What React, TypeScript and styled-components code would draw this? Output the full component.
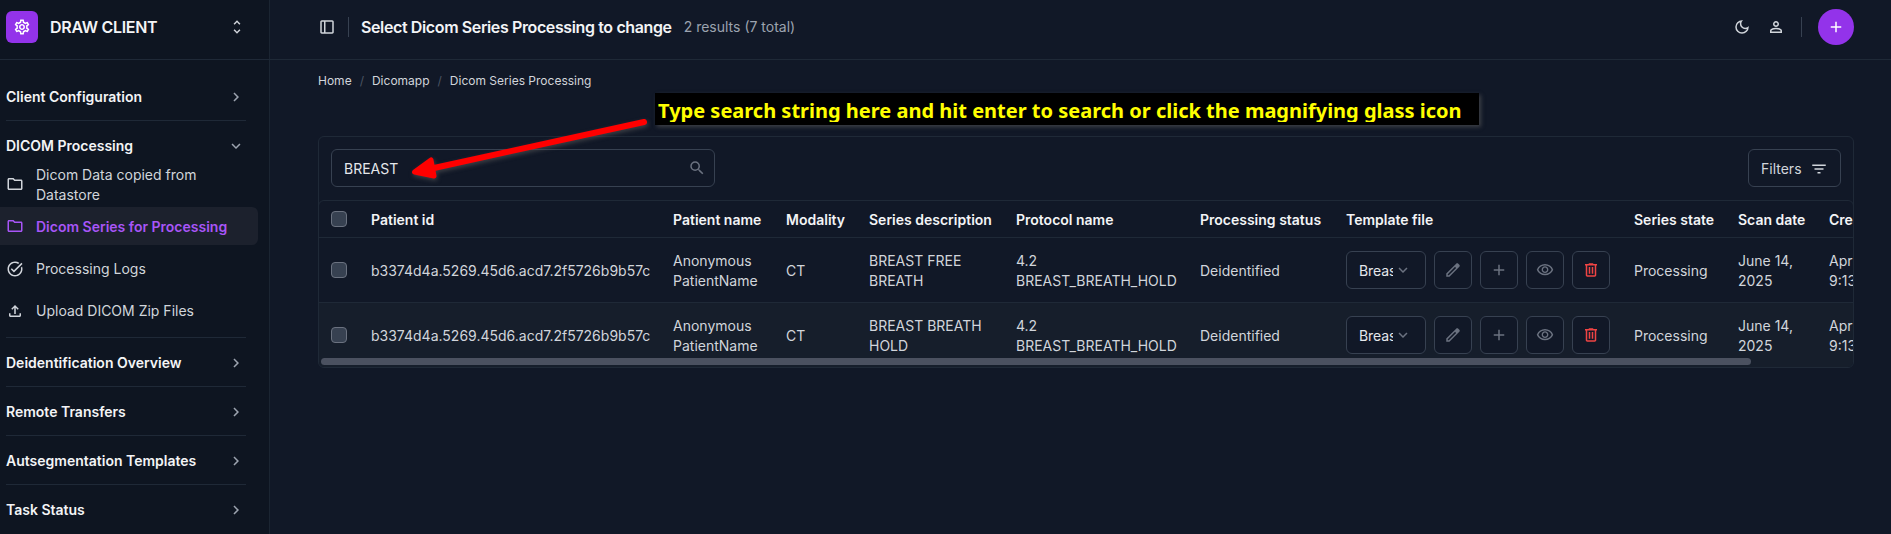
import React from "react";
import styled, { createGlobalStyle, css } from "styled-components";
import {
  MdUnfoldMore, MdChevronRight, MdExpandMore, MdOutlineFolder, MdOutlineTaskAlt, MdOutlineFileUpload,
  MdSearch, MdFilterList, MdAdd, MdOutlineSettings,
} from "react-icons/md";

const Global = createGlobalStyle`
  *, *::before, *::after { box-sizing: border-box; }
  body {
    margin: 0; background: #111827; color: #d1d5db; overflow: hidden;
    font-family: Inter, "Liberation Sans", sans-serif; font-size: 14px; line-height: 20px;
  }
  button { font: inherit; color: inherit; background: none; padding: 0; margin: 0; }
`;

const Page = styled.div`
  display: flex; width: 100%; height: 534px; overflow: hidden;
`;

/* ---------- sidebar ---------- */
const Sidebar = styled.aside`
  width: 270px; flex: none; background: #0e1521; border-right: 1px solid #1b2532;
`;
const Brand = styled.div`
  display: flex; align-items: center; height: 60px; padding: 0 24px 6px 6px;
  border-bottom: 1px solid #1f2937; width: 270px;
  span { flex: 1; font-size: 16px; font-weight: 600; color: #f3f4f6; letter-spacing: -0.3px; }
`;
const Logo = styled.div`
  width: 32px; height: 32px; border-radius: 6px; background: #9333ea; color: #fff;
  display: flex; align-items: center; justify-content: center; margin-right: 12px;
`;
const Nav = styled.nav`
  padding: 12px 23px 0 6px;
`;
const Group = styled.section`
  border-bottom: 1px solid #1f2937;
  &:last-child { border-bottom: 0; }
`;
const GroupTitle = styled.div`
  display: flex; align-items: center; justify-content: space-between;
  height: 48px; padding: 2px 1px 0 0; font-weight: 600; color: #f3f4f6;
  svg { color: #9ca3af; margin-top: -1px; }
`;
const Links = styled.div`
  padding-bottom: 5px; margin-top: -7px;
`;
const NavLink = styled.div<{ $active?: boolean; $tall?: boolean }>`
  display: flex; align-items: center; height: ${(p) => (p.$tall ? 45 : 42)}px; gap: 12px;
  margin: 0 -12px 0 -6px; padding: 0 40px 0 6px; color: #d1d5db;
  svg { flex: none; margin-top: -1px; }
  ${(p) => p.$active && css`
    height: 38px; margin-bottom: 3px; background: #1c212d; color: #a855f7; font-weight: 600;
    border-radius: 0 6px 6px 0; padding-top: 1px; padding-right: 0;
  `}
`;

/* ---------- main ---------- */
const Main = styled.main`
  flex: 1; min-width: 0;
`;
const Header = styled.header`
  display: flex; align-items: center; height: 60px; padding: 0 37px 6px 48px;
  border-bottom: 1px solid #1f2937;
`;
const Rule = styled.i`
  width: 1px; height: 20px; background: #374151;
`;
const Title = styled.h1`
  margin: 0 12px; font-size: 16px; font-weight: 600; color: #f3f4f6; letter-spacing: -0.38px;
`;
const Count = styled.span`
  flex: 1; color: #9ca3af; padding-top: 1px;
`;
const HeadIcons = styled.div<{ $gap?: number }>`
  display: flex; align-items: center; color: #d1d5db; gap: ${(p) => p.$gap ?? 16}px;
`;
const AddButton = styled.button`
  width: 36px; height: 36px; border: 0; border-radius: 50%; background: #9333ea; color: #fff;
  display: flex; align-items: center; justify-content: center;
`;
const Crumbs = styled.div`
  display: flex; padding: 11px 48px 0; gap: 8px; font-size: 12px;
  i { color: #4b5563; font-style: normal; }
`;
const Panel = styled.section`
  margin: 45px 37px 0 48px; height: 232px; border: 1px solid #1f2937; border-radius: 6px; overflow: hidden;
`;
const Toolbar = styled.div`
  display: flex; justify-content: space-between; padding: 12px;
`;
const box = css`
  height: 38px; border: 1px solid #374151; border-radius: 6px; display: flex; align-items: center;
`;
const Search = styled.div`
  ${box} width: 384px; padding: 0 8px 0 12px; justify-content: space-between;
  span { color: #e5e7eb; padding-top: 1px; }
  svg { color: #6b7280; }
`;
const Filters = styled.button`
  ${box} width: 93px; padding: 1px 12px 0; gap: 8px;
`;
const TableWrap = styled.div`
  position: relative; height: 168px; margin: 1px -1px 0; border: 1px solid #1f2937; border-radius: 6px; overflow: hidden;
`;
const Table = styled.table`
  table-layout: fixed; width: 1700px; border-collapse: separate; border-spacing: 0; text-align: left;
  th { height: 37px; padding: 2px 0 0 12px; font-weight: 600; color: #f3f4f6; border-bottom: 1px solid #1f2937; }
  td { height: 65px; padding: 1px 0 0 12px; border-bottom: 1px solid #1f2937; white-space: pre-line; vertical-align: middle; }
  th:first-child, td:first-child, td:nth-child(8) { padding-top: 0; }
  tbody tr:nth-child(even) td { background: #161e2b; border-color: #161e2b; }
`;
const Check = styled.span`
  display: block; width: 16px; height: 16px; border: 1px solid #6b7280; border-radius: 4px; background: #374151;
`;
const Actions = styled.div`
  display: flex; gap: 8px;
`;
const Select = styled.div`
  ${box} width: 80px; padding-left: 12px; background: #111827; color: #e5e7eb;
  span { width: 34px; overflow: hidden; white-space: nowrap; padding-top: 1px; letter-spacing: -0.1px; }
  svg { color: #6b7280; margin-left: 1px; margin-top: -1px; }
`;
const Action = styled.button<{ $danger?: boolean }>`
  ${box} width: 38px; justify-content: center; background: #111827; color: ${(p) => (p.$danger ? "#ef4444" : "#6b7280")};
`;
const ScrollThumb = styled.div`
  position: absolute; left: 2px; bottom: 2px; width: 1430px; height: 7px; border-radius: 4px; background: #4b5160;
`;

/* ---------- annotation over the page ---------- */
const Note = styled.div`
  position: absolute; left: 655px; top: 93px; width: 824px; height: 32px; padding: 0 3px;
  background: #000; color: #ff0; font: 700 20px/36px "Noto Sans", sans-serif; white-space: nowrap;
  box-shadow: 2px 2px 4px rgba(90, 90, 90, 0.6);
  span { display: block; height: 29px; overflow: hidden; }
`;
const Arrow = styled.svg`
  position: absolute; left: 400px; top: 110px;
  filter: drop-shadow(1px 2px 2px rgba(90, 90, 90, 0.6));
`;

const Icon = ({ d, size = 18 }: { d: string; size?: number }) => (
  <svg width={size} height={size} viewBox="0 -960 960 960" fill="currentColor"><path d={d} /></svg>
);
const paths = {
  panel: "M200-120q-33 0-56.5-23.5T120-200v-560q0-33 23.5-56.5T200-840h560q33 0 56.5 23.500T840-760v560q0 33-23.500 56.500T760-120H200Zm120-80v-560H200v560h120Zm80 0h360v-560H400v560Z",
  moon: "M480-120q-150 0-255-105T120-480q0-150 105-255t255-105q14 0 27.500 1t26.500 3q-41 29-65.500 75.500T444-660q0 90 63 153t153 63q55 0 101-24.500t75-65.500q2 13 3 26.500t1 27.500q0 150-105 255T480-120Zm0-80q88 0 158-48.500T740-375q-20 5-40 8t-40 3q-123 0-209.500-86.500T364-660q0-20 3-40t8-40q-78 32-126.500 102T200-480q0 116 82 198t198 82Z",
  person: "M480-480q-66 0-113-47t-47-113q0-66 47-113t113-47q66 0 113 47t47 113q0 66-47 113t-113 47ZM160-160v-112q0-34 17.500-62.500T224-378q62-31 126-46.500T480-440q66 0 130 15.500T736-378q29 15 46.500 43.500T800-272v112H160Zm80-80h480v-32q0-11-5.500-20T700-306q-54-27-109-40.500T480-360q-56 0-111 13.500T260-306q-9 5-14.500 14t-5.500 20v32Zm240-320q33 0 56.500-23.500T560-640q0-33-23.500-56.500T480-720q-33 0-56.500 23.500T400-640q0 33 23.500 56.500T480-560Z",
  edit: "M200-200h57l391-391-57-57-391 391v57Zm-80 80v-170l528-527q12-11 26.500-17t30.500-6q16 0 31 6t26 18l55 56q12 11 17.500 26t5.500 30q0 16-5.500 30.500T817-647L290-120H120Zm640-584-56-56 56 56Zm-141 85-28-29 57 57-29-28Z",
  eye: "M480-320q75 0 127.500-52.500T660-500q0-75-52.500-127.500T480-680q-75 0-127.500 52.500T300-500q0 75 52.500 127.500T480-320Zm0-72q-45 0-76.500-31.500T372-500q0-45 31.500-76.500T480-608q45 0 76.500 31.500T588-500q0 45-31.500 76.500T480-392Zm0 192q-146 0-266-81.500T40-500q54-137 174-218.500T480-800q146 0 266 81.500T920-500q-54 137-174 218.500T480-200Zm0-80q113 0 207.500-59.500T832-500q-50-101-144.500-160.500T480-720q-113 0-207.500 59.500T128-500q50 101 144.500 160.500T480-280Z",
  trash: "M280-120q-33 0-56.500-23.500T200-200v-520h-40v-80h200v-40h240v40h200v80h-40v520q0 33-23.500 56.500T680-120H280Zm400-600H280v520h400v-520ZM360-280h80v-360h-80v360Zm160 0h80v-360h-80v360Z",
};

const columns: [string, number][] = [
  ["", 40], ["Patient id", 302], ["Patient name", 113], ["Modality", 83], ["Series description", 147],
  ["Protocol name", 184], ["Processing status", 146], ["Template file", 288], ["Series state", 104],
  ["Scan date", 91], ["Created at", 202],
];
const rows = ["BREAST FREE\nBREATH", "BREAST BREATH\nHOLD"];

const Row = ({ series }: { series: string }) => (
  <tr>
    <td><Check /></td>
    <td>b3374d4a.5269.45d6.acd7.2f5726b9b57c</td>
    <td>{"Anonymous\nPatientName"}</td>
    <td>CT</td>
    <td>{series}</td>
    <td>{"4.2\nBREAST_BREATH_HOLD"}</td>
    <td>Deidentified</td>
    <td>
      <Actions>
        <Select><span>Breast</span><MdExpandMore size={18} /></Select>
        <Action><Icon d={paths.edit} /></Action>
        <Action><MdAdd size={18} /></Action>
        <Action><Icon d={paths.eye} /></Action>
        <Action $danger><Icon d={paths.trash} /></Action>
      </Actions>
    </td>
    <td>Processing</td>
    <td>{"June 14,\n2025"}</td>
    <td>{"April 1, 2025\n9:13 a.m."}</td>
  </tr>
);

const Closed = ({ children }: { children: string }) => (
  <Group><GroupTitle>{children}<MdChevronRight size={18} /></GroupTitle></Group>
);

export default function App() {
  return (
    <>
      <Global />
      <Page>
        <Sidebar>
          <Brand>
            <Logo><MdOutlineSettings size={18} /></Logo>
            <span>DRAW CLIENT</span>
            <MdUnfoldMore size={18} />
          </Brand>
          <Nav>
            <Closed>Client Configuration</Closed>
            <Group>
              <GroupTitle>DICOM Processing<MdExpandMore size={18} /></GroupTitle>
              <Links>
                <NavLink $tall><MdOutlineFolder size={18} />Dicom Data copied from Datastore</NavLink>
                <NavLink $active><MdOutlineFolder size={18} />Dicom Series for Processing</NavLink>
                <NavLink><MdOutlineTaskAlt size={18} />Processing Logs</NavLink>
                <NavLink><MdOutlineFileUpload size={18} />Upload DICOM Zip Files</NavLink>
              </Links>
            </Group>
            <Closed>Deidentification Overview</Closed>
            <Closed>Remote Transfers</Closed>
            <Closed>Autsegmentation Templates</Closed>
            <Closed>Task Status</Closed>
          </Nav>
        </Sidebar>
        <Main>
          <Header>
            <HeadIcons $gap={12}><Icon d={paths.panel} /><Rule /></HeadIcons>
            <Title>Select Dicom Series Processing to change</Title>
            <Count>2 results (7 total)</Count>
            <HeadIcons>
              <Icon d={paths.moon} />
              <Icon d={paths.person} />
              <Rule />
              <AddButton><MdAdd size={18} /></AddButton>
            </HeadIcons>
          </Header>
          <Crumbs>
            <span>Home</span><i>/</i><span>Dicomapp</span><i>/</i><span>Dicom Series Processing</span>
          </Crumbs>
          <Panel>
            <Toolbar>
              <Search><span>BREAST</span><MdSearch size={18} /></Search>
              <Filters>Filters<MdFilterList size={18} /></Filters>
            </Toolbar>
            <TableWrap>
              <Table>
                <colgroup>{columns.map(([n, w]) => <col key={n} width={w} />)}</colgroup>
                <thead><tr>{columns.map(([n]) => <th key={n}>{n || <Check />}</th>)}</tr></thead>
                <tbody>{rows.map((r) => <Row key={r} series={r} />)}</tbody>
              </Table>
              <ScrollThumb />
            </TableWrap>
          </Panel>
        </Main>
      </Page>
      <Note><span>Type search string here and hit enter to search or click the magnifying glass icon</span></Note>
      <Arrow width="260" height="80">
        <path d="M244 12L34 58" stroke="#f00" strokeWidth="6" strokeLinecap="round" />
        <path d="M14.500 62L31 50L34 66Z" fill="#f00" stroke="#f00" strokeWidth="5" strokeLinejoin="round" />
      </Arrow>
    </>
  );
}
